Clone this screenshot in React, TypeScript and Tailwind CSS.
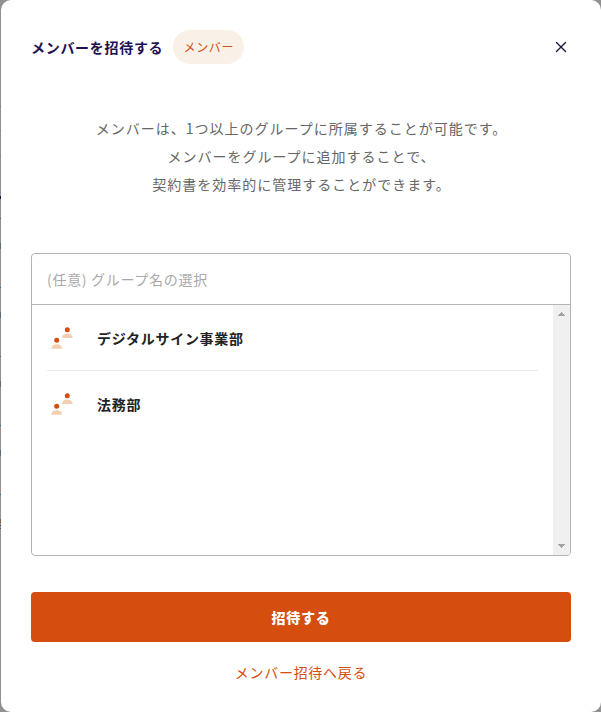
import type { ReactNode } from "react";

const groups = ["デジタルサイン事業部", "法務部"];

// Slivers of the dimmed page still visible beside the dialog
const backdropMarks = [
  { top: 106, height: 1, color: "#75777b" },
  { top: 130, height: 1, color: "#7b8186" },
  { top: 155, height: 1, color: "#75777b" },
  { top: 196, height: 3, color: "#1d1836" },
  { top: 218, height: 1, color: "#32698f" },
  { top: 243, height: 6, color: "#5f6c7c" },
  { top: 287, height: 1, color: "#32698f" },
  { top: 312, height: 6, color: "#5f6c7c" },
  { top: 356, height: 1, color: "#32698f" },
  { top: 381, height: 6, color: "#5f6c7c" },
  { top: 425, height: 1, color: "#32698f" },
  { top: 450, height: 6, color: "#5f6c7c" },
  { top: 494, height: 1, color: "#32698f" },
  { top: 519, height: 4, color: "#80603f" },
  { top: 525, height: 1, color: "#444444" },
  { top: 528, height: 1, color: "#555555" },
];

function GroupIcon() {
  return (
    <svg width="22" height="22" viewBox="0 0 22 22" aria-hidden="true" className="mt-px shrink-0">
      <circle cx="16.3" cy="2.7" r="2.5" fill="#d54e10" />
      <path d="M10.9 11a5.4 4.5 0 0 1 10.8 0z" fill="#f3ceb0" />
      <circle cx="5.7" cy="13.2" r="2.5" fill="#d54e10" />
      <path d="M0.3 21.7a5.4 4.5 0 0 1 10.8 0z" fill="#f3ceb0" />
    </svg>
  );
}

function GroupRow({ children }: { children: ReactNode }) {
  return (
    <li className="flex h-[66px] items-center border-b border-[#ebebeb] pl-1 last:border-transparent">
      <GroupIcon />
      <span className="ml-6 text-sm font-bold tracking-[0.7px] text-[#222]">{children}</span>
    </li>
  );
}

function Scrollbar() {
  return (
    <div className="flex w-[17px] shrink-0 flex-col items-center justify-between bg-[#f0f0f0] py-[7px]" aria-hidden="true">
      <svg width="7" height="4" viewBox="0 0 7 4" shapeRendering="crispEdges">
        <path d="M3 0h1v1h1v1h1v1h1v1H0V3h1V2h1V1h1z" fill="#a3a3a3" />
      </svg>
      <svg width="7" height="4" viewBox="0 0 7 4" shapeRendering="crispEdges">
        <path d="M0 0h7v1H6v1H5v1H4v1H3V3H2V2H1V1H0z" fill="#a3a3a3" />
      </svg>
    </div>
  );
}

export default function App() {
  return (
    <div className="relative h-[712px] w-[601px] overflow-hidden bg-[#919191] pl-px font-['Noto_Sans_CJK_JP',sans-serif]">
      {backdropMarks.map((mark) => (
        <span
          key={mark.top}
          className="absolute left-0 w-px"
          style={{ top: mark.top, height: mark.height, backgroundColor: mark.color }}
        />
      ))}

      <div role="dialog" aria-label="メンバーを招待する" className="flex h-full flex-col rounded-[10px] bg-white px-[30px] pt-[30px]">
        <header className="flex h-[34px] items-center">
          <h1 className="text-sm font-bold tracking-[0.7px] text-[#1f1150]">メンバーを招待する</h1>
          <span className="ml-[10px] flex h-[34px] w-[71px] items-center justify-center rounded-full bg-[#f9f1e7] text-xs tracking-[0.6px] text-[#d54e10]">
            メンバー
          </span>
          <button type="button" aria-label="閉じる" className="mr-1 ml-auto">
            <svg width="12" height="12" viewBox="0 0 12 12" stroke="#1c1838" strokeWidth="1.4" strokeLinecap="round">
              <path d="M1.5 1.5l9 9M10.5 1.5l-9 9" />
            </svg>
          </button>
        </header>

        <p className="mt-[50px] pl-px text-center text-sm leading-7 tracking-[1px] text-[#666]">
          メンバーは、1つ以上のグループに所属することが可能です。
          <br />
          メンバーをグループに追加することで、
          <br />
          契約書を効率的に管理することができます。
        </p>

        <div className="mt-[55px] flex h-[303px] flex-col overflow-hidden rounded border border-[#b4b4b4]">
          <input
            type="text"
            placeholder="(任意) グループ名の選択"
            className="h-[51px] shrink-0 border-b border-[#b4b4b4] px-[15px] text-sm tracking-[0.7px] outline-none placeholder:text-[#a9a9a9]"
          />
          <div className="flex flex-1">
            <ul className="flex-1 px-[15px]">
              {groups.map((name) => (
                <GroupRow key={name}>{name}</GroupRow>
              ))}
            </ul>
            <Scrollbar />
          </div>
        </div>

        <button type="button" className="mt-9 h-[50px] rounded bg-[#d54e10] text-sm font-black tracking-[0.7px] text-white">
          招待する
        </button>
        <a href="#" className="mt-5 self-center text-sm leading-[21px] tracking-[0.7px] text-[#d54e10]">
          メンバー招待へ戻る
        </a>
      </div>
    </div>
  );
}
